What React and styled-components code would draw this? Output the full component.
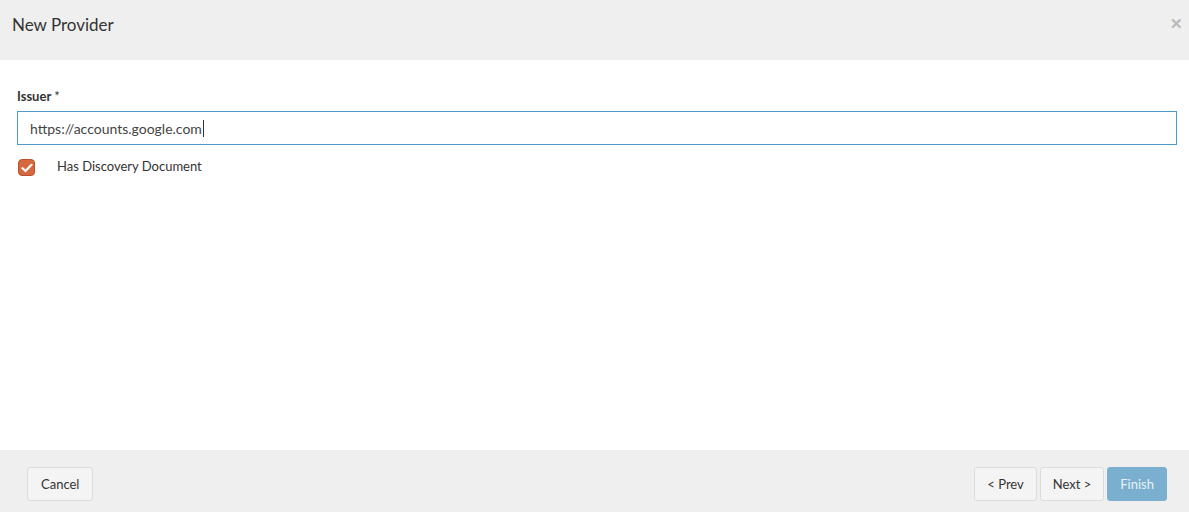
import styled, { createGlobalStyle } from 'styled-components'

const Global = createGlobalStyle`
html, body {
  margin: 0;
  padding: 0;
  background: #fff;
  font-family: Lato, "Liberation Sans", sans-serif;
  color: #333;
}
`

const Modal = styled.div`
width: 1189px;
height: 512px;
display: flex;
flex-direction: column;
`

const Header = styled.div`
height: 60px;
flex: none;
background: #efefef;
display: flex;
align-items: flex-start;
justify-content: space-between;
padding: 14px 12px 0;
box-sizing: border-box;
`

const Title = styled.h4`
margin: 0;
font-size: 17px;
line-height: 22px;
font-weight: 400;
color: #333;
`

const Close = styled.span`
margin-top: 1px;
margin-right: -6px;
color: #b9b9b9;
font-size: 15px;
font-weight: 700;
line-height: 16px;
cursor: pointer;
`

const Body = styled.div`
flex: 1;
padding: 28px 12px 0 17px;
`

const Label = styled.label`
display: block;
font-size: 13px;
font-weight: 700;
color: #333;
margin-bottom: 7px;
`

const Required = styled.span`
font-weight: 400;
margin-left: 3px;
`

const Input = styled.div`
height: 34px;
box-sizing: border-box;
border: 1px solid #4f9ccc;
padding: 0 12px;
display: flex;
align-items: center;
font-size: 14px;
color: #444;
`

const Caret = styled.span`
display: inline-block;
width: 1px;
height: 17px;
background: #333;
margin-left: 1px;
`

const CheckRow = styled.div`
display: flex;
align-items: flex-start;
gap: 22px;
margin-top: 13px;
font-size: 13px;
line-height: 16px;
color: #333;
`

const Box = styled.span`
width: 17px;
height: 17px;
border-radius: 4px;
background: #d6683f;
border: 1px solid #b8532d;
box-sizing: border-box;
display: flex;
align-items: center;
justify-content: center;
margin-left: 1px;
margin-top: 1px;
`

const Footer = styled.div`
height: 62px;
flex: none;
background: #efefef;
display: flex;
align-items: flex-start;
justify-content: space-between;
padding: 17px 22px 0 27px;
box-sizing: border-box;
`

const Group = styled.div`
display: flex;
gap: 3px;
`

const Button = styled.button`
height: 34px;
padding: 0 ${p => (p.$wide ? 13 : 12)}px;
font-family: inherit;
font-size: 13px;
border-radius: 3px;
border: 1px solid ${p => (p.$primary ? '#7aafd0' : '#dcdcdc')};
background: ${p => (p.$primary ? '#7aafd0' : '#f4f4f4')};
color: ${p => (p.$primary ? '#e9f2f8' : '#333')};
cursor: pointer;
`

export default function App() {
  return (
    <>
      <Global />
      <Modal>
        <Header>
          <Title>New Provider</Title>
          <Close>✕</Close>
        </Header>
        <Body>
          <Label>Issuer<Required>*</Required></Label>
          <Input>https://accounts.google.com<Caret /></Input>
          <CheckRow>
            <Box>
              <svg width="12" height="10" viewBox="0 0 12 10">
                <path d="M1.5 5.2 L4.5 8 L10.5 1.8" fill="none" stroke="#fff" strokeWidth="2.2" strokeLinecap="round" strokeLinejoin="round" />
              </svg>
            </Box>
            <span>Has Discovery Document</span>
          </CheckRow>
        </Body>
        <Footer>
          <Button $wide>Cancel</Button>
          <Group>
            <Button>&lt; Prev</Button>
            <Button>Next &gt;</Button>
            <Button $primary>Finish</Button>
          </Group>
        </Footer>
      </Modal>
    </>
  )
}
